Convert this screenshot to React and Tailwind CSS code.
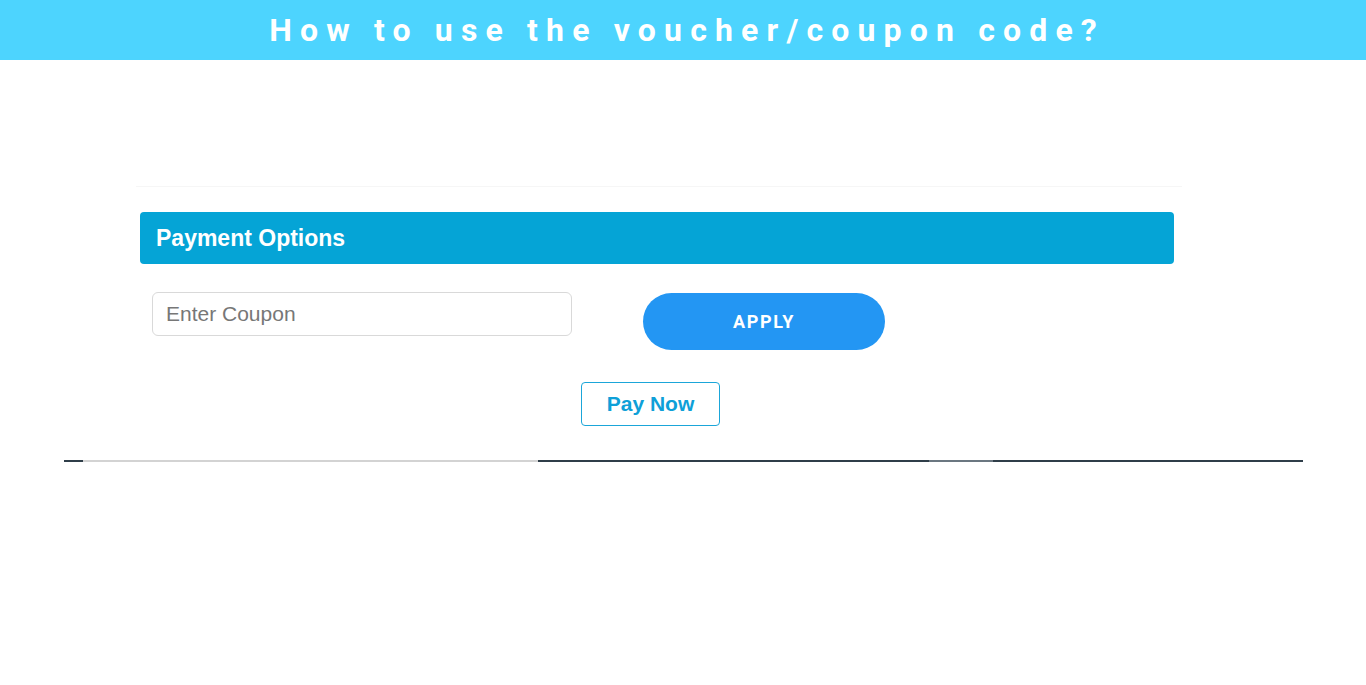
export default function App() {
  return (
    <div className="w-[1366px] h-[685px] bg-white overflow-hidden">
      <div className="h-[60px] bg-[#4dd4fe] flex items-center justify-center">
        <h1
          className="text-white font-bold text-[32px] leading-none tracking-[0.255em] pl-[0.255em]"
          style={{ fontFamily: 'Roboto, "Liberation Sans", sans-serif' }}
        >
          How to use the voucher/coupon code?
        </h1>
      </div>
      <div className="pt-[126px]">
        <div className="ml-[136px] w-[1046px] h-px bg-[#f6f6f6]" />
        <div
          className="mt-[25px] ml-[140px] w-[1034px] h-[52px] rounded-[4px] bg-[#05a4d6] flex items-center pl-[16px]"
          style={{ fontFamily: '"Liberation Sans", Arial, sans-serif' }}
        >
          <span className="text-white font-bold text-[23px]">Payment Options</span>
        </div>
        <div className="mt-[28px] flex items-start">
          <input
            type="text"
            placeholder="Enter Coupon"
            className="ml-[152px] w-[420px] h-[44px] border border-[#d9d9d9] rounded-[6px] px-[13px] text-[21px] text-[#555] placeholder:text-[#777] outline-none"
            style={{ fontFamily: '"Liberation Sans", Arial, sans-serif' }}
          />
          <button
            className="ml-[71px] mt-[1px] w-[242px] h-[57px] rounded-full bg-[#2396f3] text-white font-bold text-[18px] tracking-[0.09em] flex items-center justify-center"
            style={{ fontFamily: 'Roboto, "Liberation Sans", sans-serif' }}
          >
            APPLY
          </button>
        </div>
        <div className="mt-[32px] ml-[581px]">
          <button
            className="w-[139px] h-[44px] border-[1.5px] border-[#1ba6d9] rounded-[4px] text-[#0ea0d8] font-bold text-[21px] flex items-center justify-center"
            style={{ fontFamily: '"Liberation Sans", Arial, sans-serif' }}
          >
            Pay Now
          </button>
        </div>
        <div className="mt-[34px] ml-[64px] w-[1239px] h-[2px] flex">
          <div className="w-[19px] bg-[#2f3e49]" />
          <div className="w-[455px] bg-[#d3d3d3]" />
          <div className="w-[391px] bg-[#2f3e49]" />
          <div className="w-[64px] bg-[#6b7781]" />
          <div className="flex-1 bg-[#2f3e49]" />
        </div>
      </div>
    </div>
  );
}
